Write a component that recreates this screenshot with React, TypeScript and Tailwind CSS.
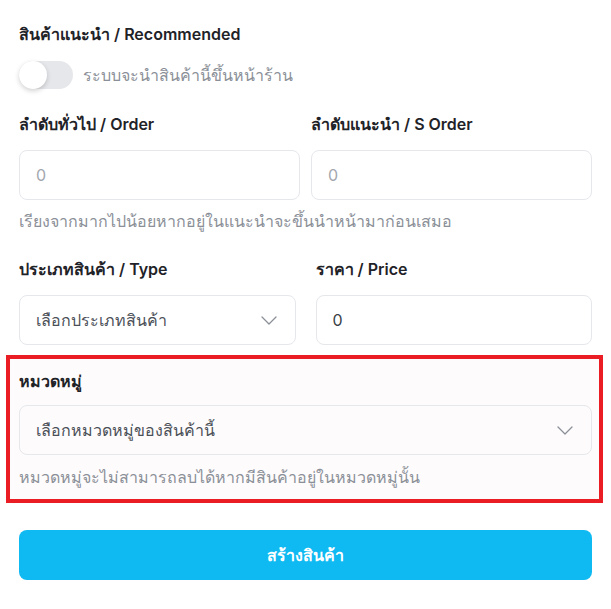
import { useState } from 'react';

function Label({ children }: { children: React.ReactNode }) {
  return <label className="block text-base leading-6 font-semibold text-[#1f2328]">{children}</label>;
}

function Helper({ children }: { children: React.ReactNode }) {
  return <p className="text-base leading-6 text-[#8b9098]">{children}</p>;
}

function Chevron() {
  return (
    <svg width="16" height="9" viewBox="0 0 16 9" fill="none" className="text-[#8b9098]">
      <path d="M1 1l7 7 7-7" stroke="currentColor" strokeWidth="1.3" strokeLinecap="round" strokeLinejoin="round" />
    </svg>
  );
}

export default function App() {
  const [recommended, setRecommended] = useState(false);

  return (
    <div className="min-h-screen bg-white font-['Inter','Noto_Sans',sans-serif] px-[19px] pt-[22px]">
      {/* Recommended */}
      <Label>สินค้าแนะนำ / Recommended</Label>
      <div className="mt-[15px] flex items-center gap-[10px]">
        <button
          type="button"
          onClick={() => setRecommended(!recommended)}
          className={`relative w-[54px] h-[28px] rounded-full ${recommended ? 'bg-sky-400' : 'bg-[#e6e7ea]'}`}
        >
          <span
            className={`absolute top-0 left-0 w-[28px] h-[28px] rounded-full bg-white shadow-[0_2px_5px_rgba(0,0,0,0.18)] ${recommended ? 'translate-x-[26px]' : ''}`}
          />
        </button>
        <span className="text-base leading-6 text-[#8b9098]">ระบบจะนำสินค้านี้ขึ้นหน้าร้าน</span>
      </div>

      {/* Order */}
      <div className="mt-[23px] grid grid-cols-2 gap-x-[11px]">
        <div>
          <Label>ลำดับทั่วไป / Order</Label>
          <input
            placeholder="0"
            className="mt-[14px] w-full h-[50px] px-4 rounded-lg border border-[#e5e7eb] text-base text-[#374151] placeholder-[#a3a7ae] outline-none"
          />
        </div>
        <div>
          <Label>ลำดับแนะนำ / S Order</Label>
          <input
            placeholder="0"
            className="mt-[14px] w-full h-[50px] px-4 rounded-lg border border-[#e5e7eb] text-base text-[#374151] placeholder-[#a3a7ae] outline-none"
          />
        </div>
      </div>
      <div className="mt-[9px]">
        <Helper>เรียงจากมากไปน้อยหากอยู่ในแนะนำจะขึ้นนำหน้ามาก่อนเสมอ</Helper>
      </div>

      {/* Type / Price */}
      <div className="mt-[24px] grid grid-cols-2 gap-x-5">
        <div>
          <Label>ประเภทสินค้า / Type</Label>
          <div className="mt-[14px] w-full h-[50px] pl-4 pr-[18px] rounded-lg border border-[#e5e7eb] flex items-center justify-between">
            <span className="text-base text-[#4b5058]">เลือกประเภทสินค้า</span>
            <Chevron />
          </div>
        </div>
        <div>
          <Label>ราคา / Price</Label>
          <input
            defaultValue="0"
            className="mt-[14px] w-full h-[50px] px-4 rounded-lg border border-[#e5e7eb] text-base text-[#3a3f47] outline-none"
          />
        </div>
      </div>

      {/* Category */}
      <div className="mt-[10px] -ml-[13px] -mr-[11px] border-4 border-[#ea1c24] bg-[#fefbfc] pl-[9px] pr-[7px] pt-[10px] pb-[10px]">
        <Label>หมวดหมู่</Label>
        <div className="mt-[12px] w-full h-[50px] pl-4 pr-[18px] rounded-lg border border-[#e5e7eb] bg-[#fdfbfc] flex items-center justify-between">
          <span className="text-base text-[#4b5058]">เลือกหมวดหมู่ของสินค้านี้</span>
          <Chevron />
        </div>
        <div className="mt-[10px]">
          <Helper>หมวดหมู่จะไม่สามารถลบได้หากมีสินค้าอยู่ในหมวดหมู่นั้น</Helper>
        </div>
      </div>

      <button
        type="button"
        className="mt-[27px] w-full h-[50px] rounded-lg bg-[#0fbaf2] text-white text-base font-semibold"
      >
        สร้างสินค้า
      </button>
    </div>
  );
}
